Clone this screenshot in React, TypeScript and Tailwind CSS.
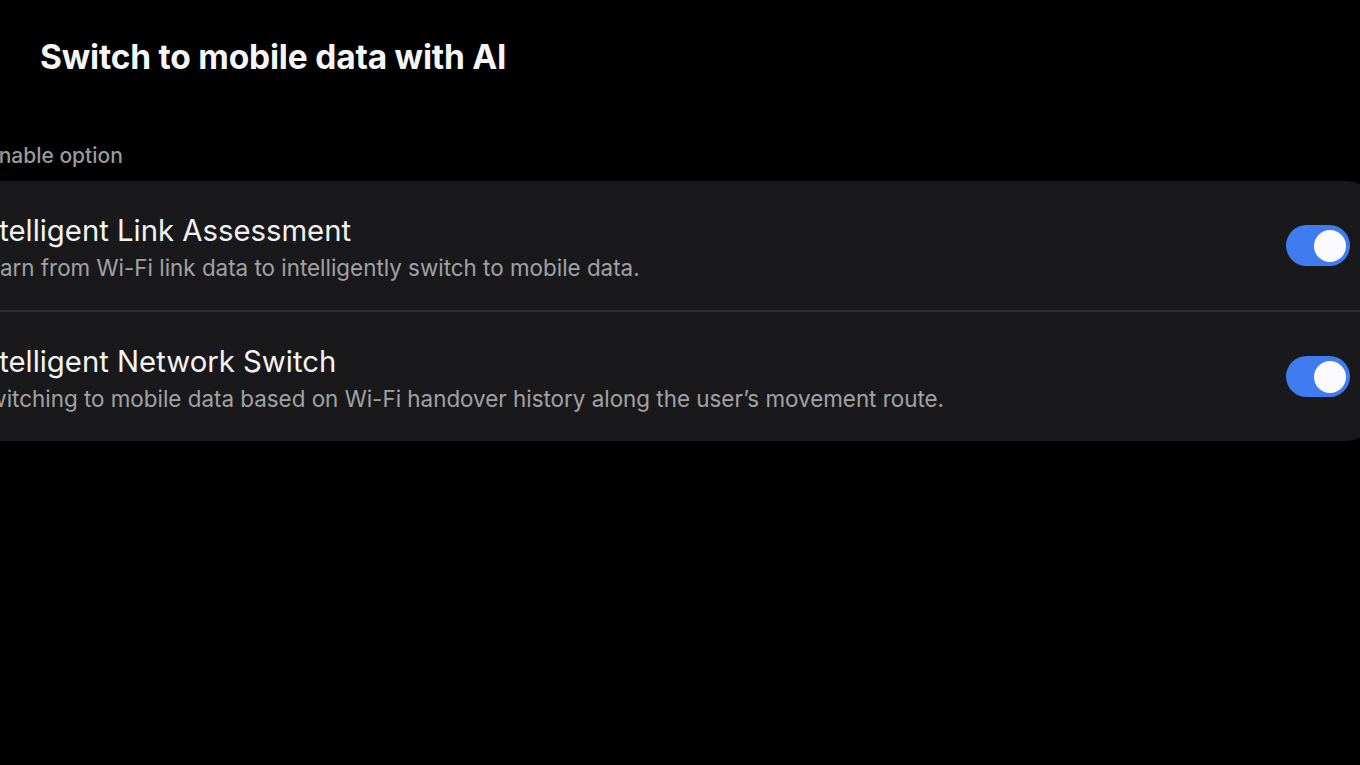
import React, { useState } from 'react';

const font = { fontFamily: 'Inter, "Noto Sans", sans-serif' };

interface ToggleProps {
  on: boolean;
  onChange: () => void;
}

const Toggle: React.FC<ToggleProps> = ({ on, onChange }) => (
  <button
    onClick={onChange}
    className={`flex h-[41px] w-[64px] shrink-0 items-center rounded-full px-[4px] ${
      on ? 'justify-end bg-[#3e7cf0]' : 'justify-start bg-[#4a4a4d]'
    }`}
  >
    <span className="h-[32px] w-[32px] rounded-full bg-[#fbfbfd]" />
  </button>
);

const options = [
  {
    id: 'link',
    title: 'Intelligent Link Assessment',
    desc: 'Learn from Wi-Fi link data to intelligently switch to mobile data.',
  },
  {
    id: 'network',
    title: 'Intelligent Network Switch',
    desc: 'Switching to mobile data based on Wi-Fi handover history along the user’s movement route.',
  },
];

export default function App() {
  const [enabled, setEnabled] = useState<Record<string, boolean>>({ link: true, network: true });

  return (
    <div className="h-[765px] w-[1360px] overflow-hidden bg-black" style={font}>
      <h1 className="pl-[40px] pt-[37px] text-[33.5px] font-bold leading-[40px] tracking-[-0.2px] text-[#f5f5f5]">
        Switch to mobile data with AI
      </h1>

      <div className="ml-[-50px] w-[1425px]">
        <p className="mt-[65px] pl-[36px] text-[21px] font-medium leading-[28px] text-[#9a9a9c]">
          Enable option
        </p>

        <div className="mt-[11px] rounded-[28px] bg-[#19191b]">
          {options.map((opt, i) => (
            <div key={opt.id}>
              {i > 0 && <div className="h-[2px] bg-[#2e2e31]" />}
              <div className="flex h-[129px] items-center justify-between pl-[24px] pr-[25px]">
                <div className="flex flex-col pt-[5px]">
                  <span className="text-[29.3px] leading-[36px] text-[#f3f3f3]">{opt.title}</span>
                  <span className="mt-[3px] text-[22.4px] leading-[31px] text-[#a2a2a5]">{opt.desc}</span>
                </div>
                <Toggle
                  on={enabled[opt.id]}
                  onChange={() => setEnabled((s) => ({ ...s, [opt.id]: !s[opt.id] }))}
                />
              </div>
            </div>
          ))}
        </div>
      </div>
    </div>
  );
}
